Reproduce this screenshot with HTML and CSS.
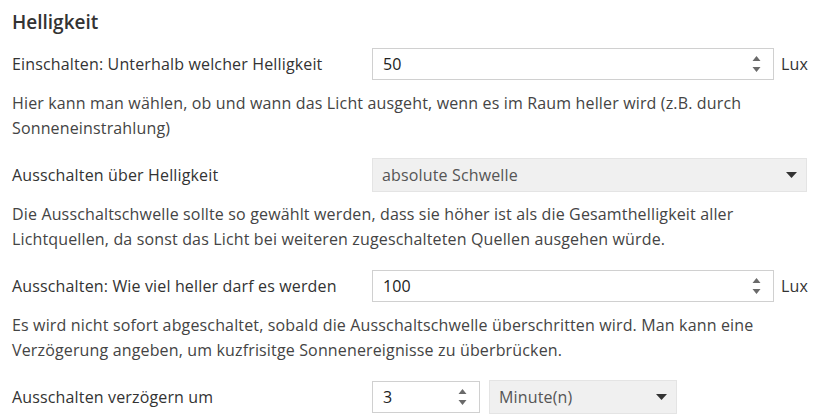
FILE: index.html
```html
<!DOCTYPE html>
<html lang="de">
<head>
<meta charset="utf-8">
<link rel="stylesheet" href="styles.css">
</head>
<body>
<div class="panel">
  <h2 class="title">Helligkeit</h2>

  <div class="row">
    <div class="label">Einschalten: Unterhalb welcher Helligkeit</div>
    <div class="control">
      <div class="num num-wide"><span class="val">50</span>
        <svg class="spin" width="9" height="20" viewBox="0 0 9 20"><path d="M4.5 2 L8.5 7 L0.5 7 Z M0.5 13 L8.5 13 L4.5 18 Z" fill="#6a6a6a"/></svg>
      </div>
      <span class="unit">Lux</span>
    </div>
  </div>

  <p class="help">Hier kann man wählen, ob und wann das Licht ausgeht, wenn es im Raum heller wird (z.B. durch Sonneneinstrahlung)</p>

  <div class="row">
    <div class="label">Ausschalten über Helligkeit</div>
    <div class="control">
      <div class="select select-wide"><span class="val">absolute Schwelle</span>
        <svg class="caret" width="11" height="6" viewBox="0 0 11 6"><path d="M0 0 L11 0 L5.5 6 Z" fill="#333"/></svg>
      </div>
    </div>
  </div>

  <p class="help">Die Ausschaltschwelle sollte so gewählt werden, dass sie höher ist als die Gesamthelligkeit aller Lichtquellen, da sonst das Licht bei weiteren zugeschalteten Quellen ausgehen würde.</p>

  <div class="row">
    <div class="label">Ausschalten: Wie viel heller darf es werden</div>
    <div class="control">
      <div class="num num-wide"><span class="val">100</span>
        <svg class="spin" width="9" height="20" viewBox="0 0 9 20"><path d="M4.5 2 L8.5 7 L0.5 7 Z M0.5 13 L8.5 13 L4.5 18 Z" fill="#6a6a6a"/></svg>
      </div>
      <span class="unit">Lux</span>
    </div>
  </div>

  <p class="help">Es wird nicht sofort abgeschaltet, sobald die Ausschaltschwelle überschritten wird. Man kann eine Verzögerung angeben, um kuzfrisitge Sonnenereignisse zu überbrücken.</p>

  <div class="row">
    <div class="label">Ausschalten verzögern um</div>
    <div class="control control-gap">
      <div class="num num-small"><span class="val">3</span>
        <svg class="spin" width="9" height="20" viewBox="0 0 9 20"><path d="M4.5 2 L8.5 7 L0.5 7 Z M0.5 13 L8.5 13 L4.5 18 Z" fill="#6a6a6a"/></svg>
      </div>
      <div class="select select-small"><span class="val">Minute(n)</span>
        <svg class="caret" width="11" height="6" viewBox="0 0 11 6"><path d="M0 0 L11 0 L5.5 6 Z" fill="#333"/></svg>
      </div>
    </div>
  </div>
</div>
</body>
</html>
```

FILE: styles.css
```css
* { box-sizing: border-box; }
html, body { margin: 0; padding: 0; background: #fff; }
body {
  font-family: "Open Sans", "Noto Sans", sans-serif;
  font-size: 16px;
  letter-spacing: 0.15px;
  color: #333;
}
.panel {
  width: 795px;
  margin-left: 12px;
  padding-top: 9px;
}
.title {
  margin: 0 0 12px 0;
  font-size: 19px;
  font-weight: 600;
  letter-spacing: 0;
  line-height: 26px;
  color: #333;
}
.row {
  display: flex;
  align-items: center;
  height: 33px;
  margin-bottom: 11px;
}
.label {
  width: 360px;
  flex: none;
  color: #333;
}
.control {
  display: flex;
  align-items: center;
  gap: 7px;
}
.control-gap { gap: 9px; }
.num {
  height: 32px;
  border: 1px solid #d0d0d0;
  background: #fff;
  display: flex;
  align-items: center;
  justify-content: space-between;
  padding: 0 12px 0 10px;
  color: #222;
}
.num-wide { width: 402px; }
.num-small { width: 108px; }
.spin { display: block; }
.unit { color: #333; }
.select {
  height: 34px;
  background: #f0f0f0;
  border: 1px solid #e4e4e4;
  display: flex;
  align-items: center;
  justify-content: space-between;
  padding: 0 9px 0 9px;
  color: #555;
}
.select-wide { width: 435px; }
.select-small { width: 188px; }
.help {
  margin: 0 0 17px 0;
  line-height: 25px;
  color: #444;
}
```
